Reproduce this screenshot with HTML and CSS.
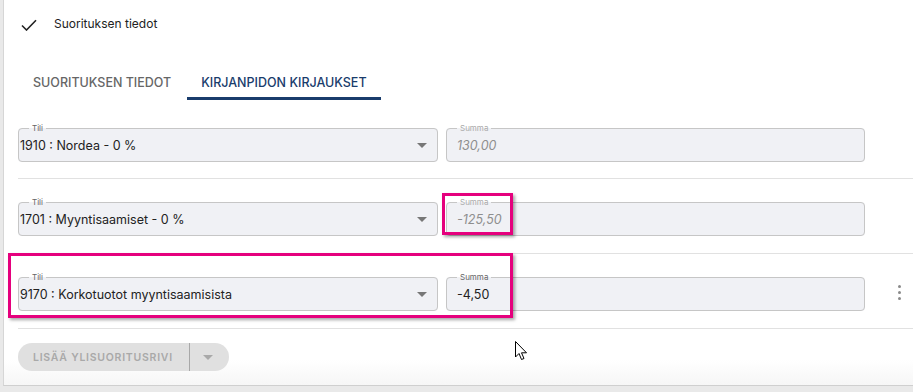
FILE: index.html
```html
<!DOCTYPE html>
<html lang="fi">
<head>
  <meta charset="UTF-8"/>
  <meta name="viewport" content="width=device-width, initial-scale=1.0"/>
  <title>Suorituksen tiedot</title>
  <link rel="stylesheet" href="styles.css">
</head>
<body>
  <div class="page">
    <div class="card">
      <div class="head">
        <svg class="check" width="16" height="12" viewBox="0 0 16 12"><path d="M1 6.5 L5.5 11 L15 1.2" fill="none" stroke="#222" stroke-width="1.6"/></svg>
        <span>Suorituksen tiedot</span>
      </div>

      <div class="tabs">
        <div class="tab">Suorituksen tiedot</div>
        <div class="tab active">Kirjanpidon kirjaukset</div>
      </div>

      <div class="rows">
        <div class="row">
          <fieldset class="field select">
            <legend>Tili</legend>
            <span class="value">1910 : Nordea - 0 %</span>
            <span class="caret"></span>
          </fieldset>
          <fieldset class="field amount disabled">
            <legend>Summa</legend>
            <span class="value">130,00</span>
          </fieldset>
        </div>

        <div class="row">
          <fieldset class="field select">
            <legend>Tili</legend>
            <span class="value">1701 : Myyntisaamiset - 0 %</span>
            <span class="caret"></span>
          </fieldset>
          <fieldset class="field amount disabled">
            <legend>Summa</legend>
            <span class="value">-125,50</span>
          </fieldset>
        </div>

        <div class="row">
          <fieldset class="field select">
            <legend>Tili</legend>
            <span class="value">9170 : Korkotuotot myyntisaamisista</span>
            <span class="caret"></span>
          </fieldset>
          <fieldset class="field amount">
            <legend>Summa</legend>
            <span class="value">-4,50</span>
          </fieldset>
          <div class="kebab"><i></i><i></i><i></i></div>
        </div>
      </div>

      <div class="actions">
        <div class="split">
          <span class="split-main">Lisää ylisuoritusrivi</span>
          <span class="split-menu"><span class="caret"></span></span>
        </div>
      </div>
    </div>

    <!-- merkinnät kuvakaappauksen päällä -->
    <div class="mark mark-sum"></div>
    <div class="mark mark-row"></div>
    <svg class="cursor" width="13" height="20" viewBox="0 0 13 20"><path d="M0.5 0.5 L0.5 16 L4 12.5 L6.5 18.5 L9 17.5 L6.5 11.8 L11.5 11.8 Z" fill="#fff" stroke="#000" stroke-width="1"/></svg>
  </div>
</body>
</html>
```

FILE: styles.css
```css
html, body { margin:0; padding:0; }
body { background:#e9e9e9; font-family:"Inter", "Liberation Sans", sans-serif; color:#222; overflow:hidden; }

.page { position:relative; width:913px; height:392px; overflow:hidden; background:#e9e9e9; }
.card { margin-left:3px; width:1000px; height:386px; box-sizing:border-box; background:linear-gradient(#fff 0, #fff 360px, #f6f6f6 385px); border-left:1px solid #d6d6d6; border-bottom:1px solid #cfcfcf; }

.head { display:flex; align-items:center; height:46px; padding-left:17px; font-size:12px; }
.head .check { margin-right:17px; margin-top:3px; }

.tabs { display:flex; height:36px; margin-top:18px; padding-left:13px; }
.tab { display:flex; align-items:center; padding:3px 16px 0; box-sizing:border-box; text-transform:uppercase; font-size:12.5px; font-weight:500; color:#666; border-bottom:3px solid transparent; }
.tab.active { padding:3px 14px 0; color:#193c6c; border-bottom-color:#193c6c; }

.rows { padding-left:14px; }
.row { display:flex; align-items:flex-start; gap:8px; height:75px; padding-top:19px; box-sizing:border-box; border-bottom:1px solid #e1e1e1; }
.row:first-child { height:79px; padding-top:24px; }

.field { margin:0; padding:0 10px 0 1px; height:38px; box-sizing:border-box; border:1px solid #c6c6c6; border-radius:4px; background:#f0f1f5; display:flex; align-items:center; }
.field legend { margin-left:9px; padding:0 3px; font-size:8px; line-height:8px; color:#666; }
.field .value { flex:1; font-size:12.5px; padding-bottom:3px; }
.select { width:420px; }
.amount { width:419px; padding-left:10px; }
.amount legend { margin-left:0; }
.disabled legend { color:#aaa; }
.disabled .value { color:#8e8e8e; font-style:italic; }

.caret { width:0; height:0; border-left:5px solid transparent; border-right:5px solid transparent; border-top:5px solid #777; margin-bottom:3px; }

.kebab { display:flex; flex-direction:column; gap:3px; margin:12px 0 0 25px; }
.kebab i { width:3px; height:3px; border-radius:50%; background:#8a8a8a; }

.actions { padding:14px 0 0 14px; }
.split { display:inline-flex; height:28px; border-radius:14px; background:#e0e0e0; color:#a9a9a9; font-size:10.5px; font-weight:600; letter-spacing:0.75px; text-transform:uppercase; }
.split-main { display:flex; align-items:center; padding:0 16px 0 15px; border-right:1px solid #a8a8a8; }
.split-menu { display:flex; align-items:center; justify-content:center; width:39px; }
.split-menu .caret { border-top-color:#a9a9a9; margin:0 0 0 -2px; }

.mark { position:absolute; border:3px solid #e5007d; box-shadow:2px 2px 3px rgba(0,0,0,.35); box-sizing:border-box; }
.mark-sum { left:442px; top:193px; width:71px; height:42px; }
.mark-row { left:8px; top:253px; width:505px; height:65px; }
.cursor { position:absolute; left:515px; top:341px; }
```
